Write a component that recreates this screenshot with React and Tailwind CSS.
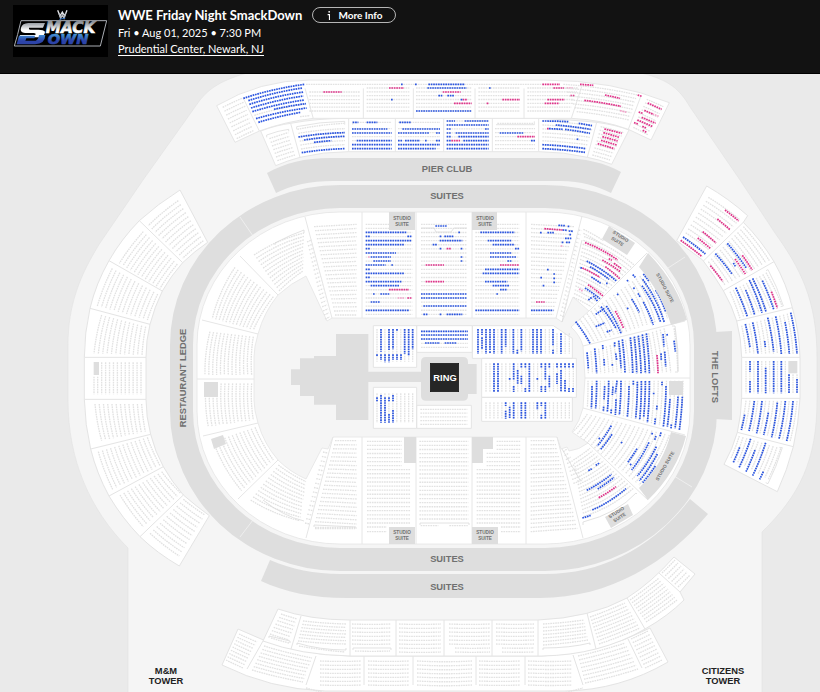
import React from "react";

const BLUE = "#2b55e0";
const PINK = "#e0338a";
const ROSE = "#f3a3ca";
const SEAT = "#e2e2e2";

// Centre of the arena in drawing units: curved rows bulge away from it.
const CX = 1335;
const CY = 1134;

const h = (y, ...xs) => {
  const out = [];
  for (let i = 0; i < xs.length; i += 2) out.push(xs[i], y, xs[i + 1], y);
  return out;
};
const v = (x, ...ys) => {
  const out = [];
  for (let i = 0; i < ys.length; i += 2) out.push(x, ys[i], x, ys[i + 1]);
  return out;
};
const dots = (...ps) => {
  const out = [];
  for (let i = 0; i < ps.length; i += 2) out.push(ps[i] - 3, ps[i + 1], ps[i] + 3, ps[i + 1]);
  return out;
};

// A bank is [ax, ay, bx, by, cx, cy, dx, dy, count]: rows run from a-b to d-c.
const bankRows = ([ax, ay, bx, by, cx, cy, dx, dy, n]) => {
  const out = [];
  for (let i = 0; i < n; i++) {
    const t = i / (n - 1);
    out.push(ax + (dx - ax) * t, ay + (dy - ay) * t, bx + (cx - bx) * t, by + (cy - by) * t);
  }
  return out;
};

const toPath = (list, ox, oy, k, r) => {
  let d = "";
  for (let i = 0; i < list.length; i += 4) {
    const x1 = ox + list[i] * k;
    const y1 = oy + list[i + 1] * k;
    const x2 = ox + list[i + 2] * k;
    const y2 = oy + list[i + 3] * k;
    if (!r) {
      d += `M${x1} ${y1}L${x2} ${y2}`;
      continue;
    }
    const len = Math.hypot(x2 - x1, y2 - y1) || 1;
    const mx = (x1 + x2) / 2;
    const my = (y1 + y2) / 2;
    let nx = (y2 - y1) / len;
    let ny = (x1 - x2) / len;
    if (nx * (mx - CX) + ny * (my - CY) < 0) {
      nx = -nx;
      ny = -ny;
    }
    const b = (len * len) / (4 * r);
    d += `M${x1} ${y1}Q${mx + nx * b} ${my + ny * b} ${x2} ${y2}`;
  }
  return d;
};

function Seats({ x = 0, y = 0, k = 1, r = 0, banks = [], blue = [], pink = [], rose = [] }) {
  const layer = (list, color, w) =>
    list.length > 0 && (
      <path d={toPath(list, x * 3, y * 3, k, r)} stroke={color} strokeWidth={w} strokeDasharray="5 2.3" fill="none" />
    );
  return (
    <g>
      {layer(banks.flatMap(bankRows), SEAT, 4)}
      {layer(rose, ROSE, 5)}
      {layer(pink, PINK, 5.2)}
      {layer(blue, BLUE, 5.2)}
    </g>
  );
}

const rectBank = (x1, y1, x2, y2, n) => [x1, y1, x2, y1, x2, y2, x1, y2, n];
const colBank = (x1, y1, x2, y2, n) => [x1, y1, x1, y2, x2, y2, x2, y1, n];

function Label({ x, y, size = 28, turn = 0, fill = "#707070", children }) {
  return (
    <text
      x={x * 3}
      y={y * 3}
      transform={`rotate(${turn} ${x * 3} ${y * 3})`}
      fontSize={size}
      fontWeight="700"
      fill={fill}
      textAnchor="middle"
      dominantBaseline="central"
      className="font-['Liberation_Sans',Arial,sans-serif]"
    >
      {children}
    </text>
  );
}

function StudioSuite({ x, y, turn = 0 }) {
  return (
    <g transform={`rotate(${turn} ${x * 3} ${y * 3})`}>
      <Label x={x} y={y - 3} size={14}>STUDIO</Label>
      <Label x={x} y={y + 3} size={14}>SUITE</Label>
    </g>
  );
}

function Grounds() {
  return (
    <g transform="scale(3)">
      <rect x="0" y="73" width="820" height="619" fill="#eaeaea" />
      <path
        d="M247 73C226 79 211 86 200 100L143 180L100 243C80 275 68 305 68 345V400C68 460 90 510 128 548V693H762V532C800 495 817 460 817 400V357C817 300 800 268 775 233L740 180L690 107C680 90 670 80 641 73Z"
        fill="#f5f5f5"
        stroke="#e0e0e0"
        strokeWidth="0.6"
      />
      <path d="M267 173C285 163 305 158 330 158H560C585 158 605 163 621 172L611 193C597 186 582 181 560 181H333C310 181 292 185 276 193Z" fill="#dedede" />
      <path d="M270 560L261 581C285 592 312 598 347 598H540C610 598 668 562 708 514L690 499C655 545 605 574 545 574H340C315 574 291 569 270 560Z" fill="#dedede" />
      <path
        fillRule="evenodd"
        d="M340 185H545A172 160 0 0 1 717 345V411A172 160 0 0 1 545 571H340A170 160 0 0 1 170 411V345A170 160 0 0 1 340 185ZM340 208A147 137 0 0 0 193 345V411A147 137 0 0 0 340 548H545A149 137 0 0 0 694 411V345A149 137 0 0 0 545 208Z"
        fill="#dedede"
      />
      <path d="M715 332L732 331V420L715 419Z" fill="#dedede" />
      <path d="M240 217L253 236M240 537L253 520M685 257L668 268M692 487L674 476" stroke="#f5f5f5" strokeWidth="0.7" />
    </g>
  );
}

function Bowl() {
  return (
    <g transform="scale(3)">
      <path
        d="M340 212A143 133 0 0 0 197 345V411A143 133 0 0 0 340 544H545A145 133 0 0 0 690 411V345A145 133 0 0 0 545 212ZM332 318H556L562 322L573 297L589 311L571 327Q580 335 583 346L585 378L583 408Q580 421 572 432L588 443Q579 450 569 451L567 447L561 449L557 437H333L328 449L322 448L306 479Q290 472 278 460Q264 444 258 423Q254 410 254 400V357Q254 347 258 334Q264 312 278 295Q291 283 306 276L327 321Z"
        fill="#fff"
        fillRule="evenodd"
        stroke="#e4e4e4"
        strokeWidth="0.8"
      />
      <path
        d="M240 256L278 295M202 320L258 334M197 379H254M203 436L258 423M238 499L278 460M306 538L333 437M305 217L332 318M362 212V318M416 212V318M472 212V318M526 212V318M362 437V544M416 437V544M472 437V544M526 437V544M582 216L556 318M647 253L589 311M685 321L583 346M585 378H690M583 408L685 435M648 500L588 443M557 437L583 538"
        stroke="#e6e6e6"
        strokeWidth="1"
        fill="none"
      />
    </g>
  );
}

function BowlBoxes() {
  return (
    <g transform="scale(3)" fill="#dedede">
      <path d="M389 212H415V230H389ZM472 212H497V230H472ZM389 527H415V544H389ZM472 527H498V544H472Z" />
      <path d="M404 437H416V463H404ZM472 437H493V449H483V463H472Z" />
      <path d="M609 226L635 243L627 255L602 239Z" />
      <path d="M648 253Q678 284 687 320L671 325Q661 292 639 267Z" />
      <path d="M671 432L686 436Q677 472 648 500L639 488Q664 463 671 432Z" />
      <path d="M605 517L628 504L633 515L611 528Z" />
      <path d="M204 382H218V397H204ZM211 439L223 435L226 444L214 449ZM669 381H683V395H669Z" />
      <g fill="none" stroke="#dadada" strokeWidth="0.8">
        <path d="M275 245V243Q290 235 304 230V233M421 228H434L436 232H451L454 228H467" />
        <path d="M263 500Q283 516 304 521M314 527V525L356 527V529M420 525V523H469V525M583 525V522Q618 513 636 493L637 494" />
        <path d="M672 326H675Q679 350 678 372H675M562 449L580 480M562 322L582 240" />
      </g>
    </g>
  );
}

function BowlSeats() {
  return (
    <g>
      <Seats
        k={3}
        r={480}
        banks={[
          [254, 255, 304, 233, 303, 271, 279, 291, 12],
          [307, 242, 312, 240, 330, 317, 325, 319, 20],
          [323, 452, 328, 453, 310, 524, 305, 523, 17],
        ]}
      />
      <Seats
        x={60}
        y={180}
        r={480}
        banks={[
          [525, 262, 457, 415, 580, 450, 640, 350, 13],
          [450, 455, 435, 585, 575, 585, 580, 470, 13],
        ]}
      />
      <Seats
        x={60}
        y={400}
        r={480}
        banks={[
          [438, -50, 445, 80, 580, 60, 575, -50, 13],
          [460, 125, 545, 272, 640, 180, 585, 82, 12],
          [572, 300, 720, 362, 738, 245, 655, 195, 12],
        ]}
      />
      <Seats
        x={290}
        y={200}
        banks={[
          [72, 80, 200, 73, 200, 345, 135, 345, 23],
          rectBank(227, 73, 367, 343, 23),
          rectBank(393, 73, 531, 343, 23),
          rectBank(556, 73, 688, 343, 23),
        ]}
        blue={[
          ...h(97, 227, 350, 505, 511, 571, 674),
          ...h(109, 227, 240, 352, 366, 449, 455, 463, 490),
          ...h(122, 227, 366, 449, 517, 593, 666),
          ...h(134, 227, 342, 428, 441, 608, 674),
          ...h(146, 227, 240, 449, 455, 512, 517, 675, 688),
          ...h(159, 227, 318, 600, 666),
          ...h(171, 242, 303, 512, 517, 600, 680),
          ...h(183, 250, 303, 512, 517, 652, 666),
          ...h(195, 227, 287, 304, 310),
          ...h(208, 227, 240, 585, 688),
          ...h(220, 227, 342, 578, 688),
          ...h(232, 227, 240),
          ...h(245, 227, 335, 585, 652),
          ...h(257, 242, 327, 608, 659),
          ...h(269, 630, 652),
          ...h(282, 249, 254, 271, 300, 393, 531, 619, 625),
          ...h(294, 393, 531),
          ...h(306, 242, 270),
          ...h(318, 400, 531),
          ...h(331, 227, 358, 556, 688),
          ...h(343, 400, 413, 449, 455, 470, 517),
          ...h(78, 436, 470),
        ]}
        pink={[
          ...h(269, 297, 357),
          ...h(294, 352, 366),
          ...h(146, 470, 483),
          ...h(195, 407, 462, 630, 688),
          ...h(245, 407, 462),
        ]}
        rose={[...h(171, 234, 240), ...h(294, 323, 342)]}
      />
      <Seats
        x={510}
        y={200}
        banks={[[63, 73, 192, 80, 130, 343, 63, 343, 23]]}
        blue={[
          145, 76, 165, 77, 173, 79, 179, 79, 158, 90, 170, 91, 176, 93, 189, 94,
          ...h(98, 90, 96, 112, 132), ...dots(181, 104), ...h(115, 165, 184), ...h(127, 155, 160, 168, 181),
          ...dots(114, 209, 133, 222, 94, 233, 133, 235, 133, 247, 101, 257), ...h(331, 63, 130),
        ]}
        pink={[103, 86, 158, 90, ...h(306, 78, 104)]}
        rose={dots(155, 138)}
      />
      <Seats
        x={510}
        y={200}
        r={420}
        banks={[
          [222, 110, 372, 195, 243, 320, 190, 292, 17],
          [220, 88, 280, 122, 280, 135, 220, 100, 2],
          [206, 90, 214, 92, 160, 350, 150, 345, 22],
          [412, 212, 472, 355, 240, 430, 197, 365, 20],
        ]}
        blue={[
          230, 183, 320, 244, 240, 200, 297, 238, 211, 203, 217, 205, 244, 231, 272, 250, 288, 250, 293, 250,
          225, 264, 270, 296, 250, 288, 263, 304, 235, 300, 247, 291,
          437, 270, 467, 335, 400, 222, 418, 245, 398, 238, 463, 368, 396, 257, 452, 367, 400, 306, 430, 375,
          365, 297, 388, 337, 368, 224, 376, 232, 351, 240, 356, 246, 370, 263, 374, 267, 384, 280, 391, 292,
          321, 282, 326, 285, 351, 324, 356, 327, 289, 318, 334, 402, 273, 320, 318, 385, 257, 343, 283, 325,
          197, 365, 240, 430, 257, 380, 285, 368, 290, 396, 305, 390,
        ]}
        pink={[
          225, 128, 323, 180, 296, 176, 306, 181, 277, 180, 332, 216, 286, 200, 330, 237, 312, 190, 333, 205,
          217, 204, 270, 232, 234, 254, 279, 288, 316, 333, 341, 386,
        ]}
        rose={[207, 267, 218, 273]}
      />
      <Seats
        x={510}
        y={200}
        r={1100}
        banks={[
          [231, 457, 235, 520, 482, 517, 462, 385, 21],
          [234, 542, 232, 622, 508, 690, 519, 542, 24],
          [492, 385, 503, 512, 504, 512, 493, 385, 2],
        ]}
        blue={[
          231, 457, 235, 505, 254, 445, 260, 520, 278, 435, 279, 449, 282, 477, 283, 497, 307, 492, 307, 498,
          314, 427, 314, 440, 317, 460, 320, 480, 326, 422, 333, 505, 337, 418, 345, 520, 361, 412, 368, 520,
          373, 410, 380, 520, 385, 407, 393, 520, 397, 403, 406, 520, 409, 400, 418, 520, 459, 402, 462, 440,
          471, 402, 472, 408, 453, 460, 454, 480, 464, 455, 467, 500, 492, 422, 496, 455,
          246, 558, 244, 625, 260, 542, 257, 625, 284, 558, 282, 598, 281, 620, 280, 635, 296, 542, 292, 635,
          309, 560, 307, 585, 304, 628, 303, 640, 321, 542, 316, 580, 318, 598, 316, 645, 333, 542, 328, 645,
          357, 558, 352, 650, 370, 542, 370, 556, 382, 545, 377, 655, 394, 543, 389, 660, 406, 543, 401, 650,
          418, 543, 412, 668, 456, 545, 456, 556, 431, 578, 431, 584, 441, 617, 440, 629, 436, 655, 434, 673,
          468, 558, 460, 680, 480, 597, 472, 680, 484, 673, 483, 685, 504, 590, 495, 685, 517, 590, 508, 690,
        ]}
        pink={[441, 465, 444, 520]}
      />
      <Seats
        x={540}
        y={400}
        r={420}
        banks={[
          [142, 42, 100, 95, 297, 255, 388, 105, 20],
          [100, 180, 150, 145, 280, 265, 130, 350, 17],
          [70, 155, 80, 148, 128, 240, 100, 250, 9],
        ]}
        blue={[
          214, 77, 172, 138, 216, 103, 181, 149, 243, 126, 247, 130, 176, 114, 181, 118, 291, 146, 263, 187,
          327, 127, 275, 210, 349, 140, 292, 228, 352, 162, 298, 242, 346, 198, 308, 248, 334, 100, 339, 102,
          348, 108, 344, 120, 363, 97, 360, 109, 270, 192, 275, 196,
          140, 271, 215, 223, 173, 267, 222, 232, 145, 212, 155, 206, 167, 196, 178, 189,
          157, 330, 258, 266, 127, 354, 152, 346,
        ]}
        pink={[176, 293, 228, 260]}
      />
      <Seats
        x={290}
        y={420}
        banks={[
          [135, 62, 200, 62, 200, 312, 75, 305, 21],
          rectBank(231, 64, 335, 137, 7),
          rectBank(231, 149, 362, 309, 14),
          rectBank(231, 321, 290, 335, 2),
          rectBank(388, 64, 535, 297, 20),
          rectBank(620, 64, 692, 88, 3),
          rectBank(590, 100, 692, 137, 4),
          rectBank(560, 149, 692, 309, 14),
          rectBank(633, 321, 692, 335, 2),
          rectBank(392, 317, 445, 317, 2),
          rectBank(478, 317, 533, 317, 2),
          [722, 62, 795, 62, 862, 325, 722, 335, 23],
          rectBank(75, 322, 195, 326, 2),
        ]}
      />
    </g>
  );
}

function Floor() {
  return (
    <g>
      <g transform="translate(870 930)">
        <path
          d="M3 178H30V145H72V138H138V72H235V185H393V156Q393 141 408 141H519Q534 141 534 156V162H560V252H534V257Q534 272 519 272H408Q393 272 393 257V216H235V330H138V284H72V258H30V225H3Z"
          fill="#dedede"
        />
        <rect x="421" y="160" width="85" height="85" fill="#262626" stroke="#111" strokeWidth="2" />
        <g fill="#fff" stroke="#e4e4e4" strokeWidth="3">
          <path d="M250 47H380V172H250ZM380 47H547V127H380ZM547 47H790L847 85V145H547ZM575 145H859V262H575ZM575 262H847V334H575ZM250 232H380V355H250ZM380 286H544V355H380Z" />
        </g>
      </g>
      <Label x={445} y={378} fill="#fff">RING</Label>
      <Seats
        x={290}
        y={310}
        banks={[
          colBank(261, 57, 368, 155, 10),
          rectBank(393, 64, 534, 112, 5),
          colBank(564, 57, 790, 131, 20),
          colBank(801, 70, 838, 131, 4),
          colBank(588, 160, 850, 246, 23),
          colBank(588, 277, 838, 326, 22),
          colBank(261, 250, 368, 338, 10),
          rectBank(391, 298, 532, 343, 5),
        ]}
        blue={[
          ...v(261, 133, 139), ...v(273, 57, 125, 133, 150), ...v(285, 133, 157), ...v(297, 57, 120, 133, 157),
          ...v(309, 57, 118, 133, 150), ...v(321, 57, 64, 133, 150), ...v(333, 133, 150), ...v(344, 57, 132),
          ...v(356, 57, 138), ...v(368, 57, 118),
          ...h(64, 393, 534), ...h(75, 393, 534), ...h(87, 393, 534), ...h(99, 405, 450, 464, 501),
          ...v(564, 57, 131), ...v(576, 57, 75, 82, 118), ...v(588, 57, 131), ...v(600, 57, 120, 124, 131),
          ...v(612, 57, 131), ...v(635, 57, 131), ...v(647, 57, 110), ...v(670, 57, 131), ...v(682, 119, 131),
          ...v(694, 57, 124), ...v(729, 57, 131), ...v(741, 57, 131), ...v(753, 57, 131), ...v(789, 57, 106, 119, 131),
          ...v(813, 70, 131),
          ...v(612, 160, 246), ...v(624, 160, 246), ...v(659, 204, 210), ...v(671, 160, 210, 228, 246),
          ...v(683, 180, 222), ...v(694, 160, 173, 197, 222), ...v(706, 160, 173, 234, 246), ...v(718, 160, 246),
          ...v(742, 204, 210), ...v(754, 160, 173, 228, 246), ...v(766, 160, 210, 228, 246), ...v(778, 160, 173, 197, 234),
          ...v(801, 160, 173, 190, 222), ...v(813, 160, 173, 180, 246), ...v(825, 160, 173, 210, 246),
          ...v(837, 160, 173, 234, 246), ...v(849, 160, 173, 234, 246),
          ...v(647, 277, 288, 302, 326), ...v(659, 290, 326), ...v(671, 277, 326), ...v(694, 277, 326),
          ...v(706, 277, 326), ...v(742, 277, 300), ...v(754, 277, 288, 314, 326), ...v(766, 277, 326),
          ...v(261, 262, 274), ...v(273, 255, 338), ...v(285, 262, 338), ...v(297, 262, 274, 312, 338),
          ...v(309, 255, 274, 300, 338),
        ]}
      />
    </g>
  );
}

function NorthStands() {
  return (
    <g>
      <g transform="translate(600 210)" fill="#fff" stroke="#e6e6e6" strokeWidth="3">
        <path d="M182 183Q230 165 272 160Q350 145 445 145H1016Q1120 150 1190 157Q1250 165 1287 180L1235 283Q1195 268 1162 262Q1090 245 1016 245H445Q370 245 300 262Q262 272 227 287Z" />
        <path d="M50 107Q180 30 330 30H1030Q1240 30 1408 98L1353 210L1285 178Q1210 150 1114 145H340Q255 155 178 183L105 217Z" />
        <path
          fill="none"
          d="M130 85L178 183M315 55L340 146M490 55V145M640 55V145M825 55V145M972 55V145M1145 50L1114 145M1322 80L1285 178M272 160L300 262M446 145V245M586 145V245M731 145V245M877 145V245M1016 145V245M1190 157L1162 262"
        />
        <path fill="none" stroke="#d6d6d6" strokeWidth="2" d="M200 202V195Q235 182 266 178V184M290 178V170Q360 155 434 154V164M458 164V154M888 164H1003V154" />
      </g>
      <Seats
        x={200}
        y={70}
        r={1000}
        banks={[
          [68, 112, 128, 84, 160, 182, 110, 206, 9],
          [163, 136, 315, 102, 315, 102, 163, 136, 2],
          [208, 206, 265, 188, 285, 255, 232, 272, 7],
          [295, 190, 435, 176, 435, 224, 303, 237, 5],
          [292, 178, 432, 160, 432, 160, 292, 178, 2],
          [300, 140, 330, 137, 330, 137, 300, 140, 2],
        ]}
        blue={[
          130, 85, 315, 43, 145, 92, 307, 54, 148, 103, 310, 66, 153, 114, 310, 78, 157, 125, 312, 90,
          222, 118, 318, 101, 168, 146, 320, 114, 175, 157, 303, 127,
          295, 201, 435, 188, 312, 210, 435, 199, 342, 217, 394, 212, 305, 248, 435, 236,
        ]}
      />
      <Seats
        x={200}
        y={70}
        banks={[
          rectBank(318, 43, 1030, 43, 2),
          rectBank(328, 66, 480, 123, 6),
          rectBank(500, 54, 628, 123, 7),
          rectBank(648, 54, 815, 123, 7),
          rectBank(835, 54, 960, 123, 7),
          [982, 54, 1135, 54, 1110, 123, 982, 123, 7],
          rectBank(458, 157, 575, 157, 2),
          rectBank(456, 176, 575, 236, 6),
          rectBank(594, 157, 720, 157, 2),
          rectBank(594, 176, 720, 236, 6),
          rectBank(740, 153, 866, 236, 8),
          rectBank(885, 176, 1005, 236, 6),
          rectBank(892, 160, 1000, 160, 2),
        ]}
        blue={[
          ...h(43, 603, 610, 645, 651, 685, 795),
          ...h(54, 682, 800, 867, 873),
          ...h(89, 573, 579, 782, 788),
          ...h(77, 715, 727, 742, 762),
          ...h(123, 648, 815),
          ...h(153, 740, 765, 794, 866),
          ...h(157, 458, 475, 500, 532, 598, 632),
          ...h(165, 740, 866),
          ...h(177, 456, 562, 607, 720, 740, 752, 855, 866),
          ...h(189, 456, 575, 594, 688, 708, 720, 740, 752, 767, 866, 899, 971),
          ...h(200, 740, 752, 775, 866),
          ...h(212, 470, 575, 594, 608, 615, 660, 675, 680, 708, 720, 740, 752, 790, 866, 993, 1005),
          ...h(224, 456, 575, 594, 720, 740, 866),
          ...h(236, 456, 575, 594, 707, 740, 866),
        ]}
        pink={[
          ...h(66, 370, 425, 728, 782),
          ...h(54, 567, 612, 1060, 1092),
          ...h(89, 788, 802, 907, 960, 1042, 1094),
          ...h(100, 762, 815, 860, 866, 1034, 1078),
          ...h(43, 1027, 1080),
          ...h(77, 1111, 1123),
          ...h(212, 754, 780),
          ...h(200, 952, 1005),
        ]}
        rose={h(54, 1100, 1118)}
      />
      <Seats
        x={430}
        y={70}
        r={1400}
        banks={[
          [400, 43, 622, 75, 597, 150, 440, 125, 8],
          [650, 88, 700, 110, 655, 195, 610, 172, 9],
          [337, 153, 490, 168, 465, 247, 337, 236, 8],
          [512, 170, 580, 188, 540, 270, 487, 255, 9],
        ]}
        blue={[
          337, 153, 417, 155, 446, 160, 486, 167, 377, 165, 482, 178, 357, 176, 398, 178, 405, 178, 480, 190,
          440, 207, 446, 208, 337, 224, 468, 236, 337, 236, 465, 247,
        ]}
        pink={[
          450, 43, 490, 46, 525, 75, 570, 85, 463, 91, 573, 109, 623, 75, 635, 79,
          653, 99, 695, 118, 643, 121, 668, 132, 626, 126, 638, 130, 635, 142, 677, 160, 622, 150, 669, 170,
          612, 158, 624, 162, 637, 169, 648, 174, 638, 181, 650, 187,
          523, 177, 575, 190, 520, 188, 568, 202, 517, 200, 563, 213, 513, 211, 560, 225, 503, 221, 553, 236,
          351, 176, 357, 176,
        ]}
        rose={[570, 122, 590, 127, 668, 132, 686, 139]}
      />
    </g>
  );
}

function WestStands() {
  return (
    <g>
      <g transform="translate(180 540)" fill="#fff" stroke="#e4e4e4" strokeWidth="3">
        <path d="M360 30Q293 72 238 122Q184 177 147 242Q108 310 90 385Q73 460 73 532V658Q75 735 92 807Q110 880 147 948Q187 1015 240 1070Q292 1120 358 1158L448 1007Q408 978 370 945Q335 905 310 860Q285 815 272 763Q258 710 258 658V532Q258 480 270 433Q283 382 307 333Q333 287 368 248Q403 214 443 187Z" />
        <path fill="none" d="M238 122L368 248M147 242L307 333M90 385L270 433M73 532H258M73 658H258M92 807L272 763M147 948L310 860M240 1070L370 945" />
        <path d="M101 546H117V585H101Z" fill="#dedede" stroke="none" />
      </g>
      <Seats
        x={60}
        y={180}
        r={650}
        banks={[
          [355, 62, 265, 137, 368, 235, 430, 182, 11],
          [250, 155, 178, 250, 300, 325, 352, 252, 12],
          [157, 265, 112, 378, 262, 420, 293, 342, 13],
          [125, 405, 102, 520, 246, 525, 257, 440, 12],
        ]}
      />
      <Seats x={60} y={180} banks={[colBank(125, 547, 243, 643, 11), colBank(102, 590, 113, 643, 2)]} />
      <Seats
        x={60}
        y={400}
        r={650}
        banks={[
          [105, 12, 125, 122, 256, 95, 245, 12, 12],
          [115, 155, 158, 268, 300, 197, 262, 112, 13],
          [180, 285, 250, 380, 362, 280, 305, 215, 12],
          [270, 400, 358, 468, 435, 345, 370, 298, 11],
        ]}
      />
    </g>
  );
}

function EastStands() {
  return (
    <g>
      <g transform="translate(1980 540)" fill="#fff" stroke="#e4e4e4" strokeWidth="3">
        <path d="M140 18Q205 55 263 107L250 127Q303 180 342 245Q380 312 397 383Q418 455 420 532V655Q416 730 400 800Q382 870 352 935L192 853Q218 807 232 757Q244 705 245 652V532Q244 475 230 423Q216 377 190 332Q163 286 128 240L50 182Z" />
        <path fill="none" d="M250 127L130 243M342 245L190 332M397 383L230 423M420 532H245M420 655H245M400 800L232 757" />
        <path fill="none" stroke="#d6d6d6" strokeWidth="2" d="M318 272L324 269Q352 320 370 378L362 380M358 802L367 803Q350 860 324 911L317 908" />
        <path d="M385 543H412V580H385Z" fill="#dedede" stroke="none" />
      </g>
      <Seats
        x={660}
        y={180}
        r={750}
        banks={[
          [62, 182, 127, 230, 240, 120, 145, 52, 12],
          [145, 245, 195, 315, 328, 242, 250, 140, 13],
          [210, 335, 240, 415, 365, 375, 318, 278, 12],
          [245, 437, 258, 520, 411, 522, 393, 398, 14],
          [258, 662, 243, 745, 390, 785, 411, 663, 14],
          [238, 768, 213, 835, 325, 898, 362, 805, 12],
        ]}
        blue={[
          69, 171, 136, 222, 202, 190, 259, 264, 166, 221, 216, 282, 220, 249, 226, 259,
          227, 323, 262, 410, 257, 330, 284, 405, 268, 300, 306, 398, 278, 295, 318, 395, 307, 302, 341, 388,
          256, 432, 270, 502, 278, 427, 294, 522, 314, 483, 316, 501, 323, 413, 341, 515, 347, 409, 364, 522,
          375, 426, 388, 522, 392, 398, 411, 522,
          254, 704, 244, 750, 283, 663, 267, 753, 306, 663, 290, 760, 325, 698, 311, 765, 352, 668, 335, 772,
          376, 663, 357, 777, 399, 663, 380, 783,
          239, 802, 220, 847, 272, 776, 237, 863, 285, 810, 258, 875, 317, 788, 278, 887, 310, 875, 299, 898,
        ]}
        pink={[
          195, 90, 236, 123, 172, 117, 211, 150, 128, 155, 168, 189, 113, 174, 152, 206, 62, 181, 126, 230,
          247, 226, 277, 270, 225, 237, 256, 282, 151, 257, 188, 304, 334, 335, 352, 385,
        ]}
      />
      <Seats
        x={660}
        y={180}
        banks={[colBank(258, 543, 376, 640, 11), colBank(387, 583, 411, 640, 3)]}
        blue={[
          ...v(270, 543, 575, 603, 640), ...v(294, 543, 640), ...v(317, 563, 640), ...v(341, 543, 640),
          ...v(364, 543, 640), ...v(387, 583, 640), ...v(411, 597, 640),
        ]}
      />
    </g>
  );
}

function SouthStands() {
  return (
    <g>
      <g transform="scale(3)" fill="#fff" stroke="#e4e4e4" strokeWidth="1">
        <path d="M238 629L222 665Q270 689 325 691H565Q620 690 668 662L650 628Q600 654 542 656H350Q290 655 238 629Z" />
        <path d="M278 609Q310 620 350 620H538Q590 618 627 598Q652 582 674 557L695 574L680 592L684 600Q668 616 645 629Q600 655 542 656H350Q300 655 263 641Z" />
        <path
          fill="none"
          d="M301 616L291 649M350 620V656M396 620V656M444 620V656M492 620V656M538 620V656M587 613L596 649M627 598L645 629M659 573L680 592M263 641L247 669M316 656L306 685M364 656V685M413 656V685M476 656V685M525 656V685M573 655L583 685M628 639L642 668"
        />
        <path fill="none" stroke="#d6d6d6" strokeWidth="0.7" d="M269 638V636L290 641V643M297 645V643Q320 650 346 650V648M353 650V648H391V650M543 650V648Q570 648 590 643V645" />
      </g>
      <Seats
        k={3}
        r={1500}
        banks={[
          [281, 614, 297, 619, 289, 640, 270, 634, 7],
          [303, 621, 346, 624, 346, 644, 298, 641, 7],
          [271, 638, 289, 643, 289, 643, 271, 638, 2],
          [299, 646, 345, 652, 345, 652, 299, 646, 2],
          rectBank(352, 624, 391, 644, 6),
          rectBank(355, 651, 390, 651, 2),
          rectBank(399, 624, 441, 652, 8),
          rectBank(449, 624, 490, 644, 6),
          rectBank(455, 648, 490, 652, 2),
          rectBank(496, 624, 534, 644, 6),
          rectBank(502, 648, 534, 652, 2),
          [543, 624, 584, 620, 588, 640, 543, 645, 7],
          [590, 617, 625, 603, 640, 628, 599, 644, 9],
          [630, 600, 659, 578, 677, 600, 646, 622, 9],
          [662, 573, 675, 560, 690, 575, 678, 587, 6],
          [239, 634, 257, 642, 243, 668, 226, 660, 9],
          [264, 646, 312, 658, 303, 682, 252, 670, 8],
          rectBank(320, 661, 361, 685, 7),
          rectBank(368, 661, 409, 685, 7),
          rectBank(417, 661, 472, 685, 7),
          rectBank(479, 661, 520, 685, 7),
          rectBank(528, 661, 572, 685, 7),
          rectBank(306, 688, 583, 688, 2),
          [578, 656, 625, 643, 638, 669, 585, 683, 8],
          [631, 639, 648, 631, 662, 660, 645, 668, 9],
        ]}
      />
    </g>
  );
}

function SeatMap() {
  return (
    <svg viewBox="0 222 2460 1854" className="block h-auto w-full" role="img" aria-label="Seat map">
      <Grounds />
      <NorthStands />
      <WestStands />
      <EastStands />
      <SouthStands />
      <Bowl />
      <BowlSeats />
      <BowlBoxes />
      <Floor />
      <Label x={447} y={169}>PIER CLUB</Label>
      <Label x={447} y={196}>SUITES</Label>
      <Label x={447} y={559}>SUITES</Label>
      <Label x={447} y={587}>SUITES</Label>
      <Label x={183} y={378} turn={-90}>RESTAURANT LEDGE</Label>
      <Label x={715} y={377} turn={90}>THE LOFTS</Label>
      <Label x={166} y={671} fill="#222">M&amp;M</Label>
      <Label x={166} y={681} fill="#222">TOWER</Label>
      <Label x={723} y={671} fill="#222">CITIZENS</Label>
      <Label x={723} y={681} fill="#222">TOWER</Label>
      <StudioSuite x={402} y={221} />
      <StudioSuite x={485} y={221} />
      <StudioSuite x={402} y={535} />
      <StudioSuite x={485} y={535} />
      <StudioSuite x={619} y={239} turn={32} />
      <StudioSuite x={618} y={515} turn={-32} />
      <Label x={665} y={288} turn={62} size={14}>STUDIO SUITE</Label>
      <Label x={665} y={466} turn={-60} size={14}>STUDIO SUITE</Label>
    </svg>
  );
}

function Logo() {
  return (
    <svg viewBox="0 0 285 156" className="h-[52px] w-[95px] shrink-0 bg-black" role="img" aria-label="WWE SmackDown">
      <defs>
        <linearGradient id="silver" gradientUnits="userSpaceOnUse" x1="0" y1="52" x2="0" y2="86">
          <stop offset="0" stopColor="#8f959c" />
          <stop offset="0.7" stopColor="#ffffff" />
        </linearGradient>
        <linearGradient id="royal" gradientUnits="userSpaceOnUse" x1="0" y1="84" x2="0" y2="118">
          <stop offset="0" stopColor="#4aa3e0" />
          <stop offset="0.7" stopColor="#2c43a8" />
        </linearGradient>
      </defs>
      <g fill="none" strokeWidth="4">
        <path d="M134 16L141 33L148 21L155 33L162 16" stroke="#e5e7eb" />
        <path d="M138 25L143 40L148 30L153 40L158 25" stroke="#b8bcc2" />
        <path d="M139 43L157 39" stroke="#2f6fc0" strokeWidth="3" />
      </g>
      <path d="M24 47H281L262 123H4L14 88Z" fill="none" stroke="#a9adb3" strokeWidth="3" />
      <path d="M96 54H46Q28 55 24 68Q20 82 36 84H62Q70 84 67 90H20L24 97H80Q96 92 96 80Q92 74 76 74H52Q46 74 48 68H90Z" fill="url(#silver)" />
      <path d="M18 92H66L64 100H40L37 107H68Q76 104 78 90H97Q96 117 66 118H11Z" fill="url(#royal)" />
      <text className="font-['DejaVu_Sans',sans-serif]" fontWeight="700" fontStyle="italic" fontSize="46">
        <tspan x="98" y="84" fill="url(#silver)" stroke="url(#silver)" strokeWidth="2">MACK</tspan>
        <tspan x="104" y="118" fontSize="44" fill="url(#royal)" stroke="url(#royal)" strokeWidth="2">OWN</tspan>
      </text>
    </svg>
  );
}

export default function App() {
  return (
    <div className="bg-[#eaeaea] font-[Lato,sans-serif]">
      <header className="flex items-start gap-[10px] border-b border-black bg-[#121212] px-[13px] pt-[5px] pb-4 text-white">
        <Logo />
        <div className="flex flex-col">
          <div className="flex items-center gap-[10px]">
            <h1 className="text-[13px] leading-[20px] font-bold">WWE Friday Night SmackDown</h1>
            <button
              type="button"
              className="flex h-4 items-center gap-[6px] rounded-full border border-[#b5b5b5] px-[13px] text-[10px] leading-[14px] font-bold"
            >
              <svg viewBox="0 0 6 12" className="h-[11px] w-[6px]" fill="none" stroke="currentColor" aria-hidden="true">
                <path d="M1.5 5H3.5V11" strokeWidth="1.2" />
                <circle cx="3.2" cy="2" r="1" fill="currentColor" stroke="none" />
              </svg>
              More Info
            </button>
          </div>
          <p className="text-[11px] leading-[16px]">Fri • Aug 01, 2025 • 7:30 PM</p>
          <a href="#venue" className="text-[11px] leading-[16px] underline underline-offset-2">
            Prudential Center, Newark, NJ
          </a>
        </div>
      </header>
      <main>
        <SeatMap />
      </main>
    </div>
  );
}
